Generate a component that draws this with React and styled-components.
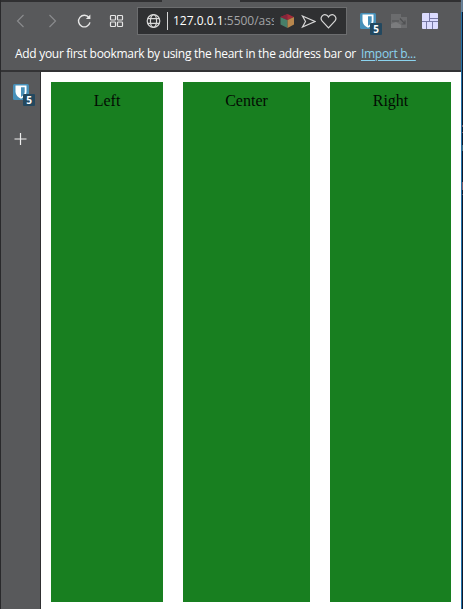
import React from "react";
import styled, { createGlobalStyle } from "styled-components";

const Global = createGlobalStyle`
  * { box-sizing: border-box; }
  body { margin: 0; overflow: hidden; background: #fff; }
  svg { display: block; flex: none; }
`;

const Screen = styled.div`
  display: grid;
  grid-template-columns: 460px 1px 1px;
  width: 463px;
  height: 609px;
  border-left: 1px solid #29292b;
  overflow: hidden;
`;
const Browser = styled.div`
  display: grid;
  grid-template-rows: 2px 38px 30px 1fr;
  min-width: 0;
  background: #58595b;
  font-family: "Open Sans", "Noto Sans", sans-serif;
`;
const TabStrip = styled.div`
  display: grid;
  grid-template-columns: 161px 78px 1fr;
`;
const TabEdge = styled.div`
  background: ${(p) => (p.$active ? "#58595b" : "#303032")};
`;
const Toolbar = styled.nav`
  display: flex;
  align-items: flex-start;
  padding: 5px 0 0 12px;
`;
const ToolButton = styled.span`
  display: flex;
  align-items: center;
  justify-content: center;
  flex: none;
  width: ${(p) => p.$w || 16}px;
  height: 27px;
  margin-right: ${(p) => p.$gap || 0}px;
  color: ${(p) => (p.$dim ? "#8a8b8d" : "#e6e6e6")};
`;
const AddressField = styled.div`
  display: flex;
  align-items: center;
  flex: none;
  width: 210px;
  height: 28px;
  padding-left: 8px;
  margin-right: 13px;
  background: #2f3032;
  border: 1px solid #6c6d6f;
  color: #d8d8d8;
`;
const Divider = styled.span`
  flex: none;
  width: 1px;
  height: 18px;
  margin: 0 5px 0 6px;
  background: #d6d6d6;
`;
const Url = styled.span`
  flex: none;
  width: 101px;
  overflow: hidden;
  white-space: nowrap;
  font-size: 12px;
  line-height: 20px;
  color: #a3a4a6;
  margin-right: 6px;
`;
const Host = styled.span`
  color: #fff;
`;
const Actions = styled.span`
  display: flex;
  align-items: center;
  gap: 4px;
  margin-left: 6px;
`;
const BookmarkBar = styled.div`
  display: flex;
  padding: 5px 0 0 14px;
  font-size: 12px;
  line-height: 17px;
  white-space: nowrap;
  letter-spacing: -0.3px;
  color: #fff;
`;
const Message = styled.span`
  width: 346px;
`;
const ImportLink = styled.span`
  color: #8bd3ee;
  text-decoration: underline;
  text-underline-offset: 2px;
`;
const Body = styled.div`
  display: grid;
  grid-template-columns: 40px 1fr;
  border-top: 2px solid #333335;
`;
const SidePanel = styled.aside`
  display: flex;
  flex-direction: column;
  padding: 12px 0 0 12px;
  border-right: 1px solid #303032;
  color: #eee;
`;
const ShieldButton = styled.span`
  position: relative;
  flex: none;
  width: 22px;
  height: ${(p) => (p.$side ? 48 : 24)}px;
  margin: ${(p) => (p.$side ? "0" : "6px 9px 0 0")};
`;
const Badge = styled.span`
  position: absolute;
  left: 10px;
  top: 10px;
  width: 12px;
  height: 12px;
  border-radius: 1px;
  background: #23485f;
  color: #fff;
  font-size: 10px;
  font-weight: 700;
  line-height: 12px;
  text-align: center;
`;
const Page = styled.main`
  display: grid;
  grid-template-columns: 112px 127px 121px;
  column-gap: 20px;
  padding: 10px 10px 7px;
  background: #fff;
`;
const Column = styled.section`
  padding-top: 10px;
  background: #187f20;
  color: #030b03;
  font-family: "Liberation Serif", "Times New Roman", serif;
  font-size: 16px;
  line-height: 18px;
  text-align: center;
`;
const WindowEdge = styled.div`
  background: linear-gradient(#6685a0 0 12px, #2374ab 12px);
`;
const Backdrop = styled.div`
  background: linear-gradient(
    #65798c 0 12px, #10182a 12px 125px, #76515d 125px 127px,
    #10182a 127px 132px, #76515d 132px 133px, #10182a 133px 145px,
    #446574 145px 151px, #10182a 151px 182px, #865861 182px 190px,
    #10182a 190px 194px, #5b4654 194px 195px, #10182a 195px
  );
`;

const Icon = ({ w = 16, h = 16, children }) => (
  <svg width={w} height={h} viewBox={`0 0 ${w} ${h}`} fill="none" stroke="currentColor" strokeWidth="1.2">
    {children}
  </svg>
);

const Shield = ({ side }) => (
  <ShieldButton $side={side}>
    <Icon>
      <rect width="16" height="16" rx="1.5" fill="#4790b9" stroke="none" />
      <path d="M2.5 1.5H13.5V8C13.5 11 11 13.2 8 14.8C5 13.2 2.5 11 2.5 8Z" fill="#fff" stroke="none" />
      <path d="M8 3.2H11.7V8C11.7 10.2 10 11.8 8 13Z" fill="#4790b9" stroke="none" />
    </Icon>
    <Badge>5</Badge>
  </ShieldButton>
);

export default function App() {
  return (
    <>
      <Global />
      <Screen>
        <Browser>
          <TabStrip><TabEdge /><TabEdge $active /><TabEdge /></TabStrip>
          <Toolbar>
            <ToolButton $dim $gap={16}><Icon><path d="M10.5 2L4.5 8L10.5 14" /></Icon></ToolButton>
            <ToolButton $dim $gap={15}><Icon><path d="M4.5 2L10.5 8L4.5 14" /></Icon></ToolButton>
            <ToolButton $gap={16}>
              <Icon>
                <path d="M13 4.6A5.8 5.8 0 1 0 14 9.4" strokeWidth="1.4" />
                <path d="M14.4 1.5V6H9.9Z" fill="currentColor" stroke="none" />
              </Icon>
            </ToolButton>
            <ToolButton $gap={13}>
              <Icon>
                <rect x="2.5" y="2.5" width="5" height="4.5" rx=".8" />
                <rect x="9.5" y="2.5" width="5" height="4.5" rx=".8" />
                <rect x="2.5" y="9" width="5" height="4.5" rx=".8" />
                <rect x="9.5" y="9" width="5" height="4.5" rx=".8" />
              </Icon>
            </ToolButton>
            <AddressField>
              <Icon w={15}>
                <circle cx="7.5" cy="8" r="6.3" />
                <ellipse cx="7.5" cy="8" rx="3.1" ry="6.3" />
                <path d="M1.8 5.7H13.2M1.8 10.3H13.2" />
              </Icon>
              <Divider />
              <Url><Host>127.0.0.1</Host>:5500/ass</Url>
              <Icon w={15}>
                <path d="M7.5 1L14 4L7.5 7L.5 4Z" fill="#a82a39" stroke="none" />
                <path d="M.5 4L7.5 7V15L.5 11.5Z" fill="#477f69" stroke="none" />
                <path d="M7.5 7L14 4V11.5L7.5 15Z" fill="#b8874d" stroke="none" />
                <path d="M.5 4L7.5 1V7Z" fill="#84253a" stroke="none" />
              </Icon>
              <Actions>
                <Icon w={15} h={15}><path d="M1.5 2L14 7.5L1.5 13L4.5 7.5Z" /></Icon>
                <Icon w={17}>
                  <path d="M8.5 14.8L2.2 8.2C-.7 4.9 3 0 6.9 2.2Q8 3 8.5 4Q9 3 10.1 2.2C14 0 17.7 4.9 14.8 8.2Z" />
                </Icon>
              </Actions>
            </AddressField>
            <Shield />
            <ToolButton $w={16} $gap={15}>
              <Icon>
                <path d="M0 1H10V4H16V15H0Z" fill="#6b6c6e" stroke="none" />
                <path d="M0 11L5 9L10 12V15H0Z" fill="#7b7c7e" stroke="none" />
                <path d="M9 5.5L14 11M14 7.5V11H10.5M1 8H8" stroke="#505153" />
              </Icon>
            </ToolButton>
            <ToolButton>
              <Icon>
                <rect width="16" height="16" rx="1" fill="#dcdcff" stroke="none" />
                <path d="M0 8.5H16M7.5 0V8.5M7.5 5.5H16M4.5 8.5V16M10.5 8.5V16" stroke="#7779a6" strokeWidth="1" />
              </Icon>
            </ToolButton>
          </Toolbar>
          <BookmarkBar>
            <Message>Add your first bookmark by using the heart in the address bar or</Message>
            <ImportLink>Import b...</ImportLink>
          </BookmarkBar>
          <Body>
            <SidePanel>
              <Shield side />
              <Icon><path d="M7.5 1V13M1.5 7H13.5" /></Icon>
            </SidePanel>
            <Page>
              <Column>Left</Column>
              <Column>Center</Column>
              <Column>Right</Column>
            </Page>
          </Body>
        </Browser>
        <WindowEdge />
        <Backdrop />
      </Screen>
    </>
  );
}
